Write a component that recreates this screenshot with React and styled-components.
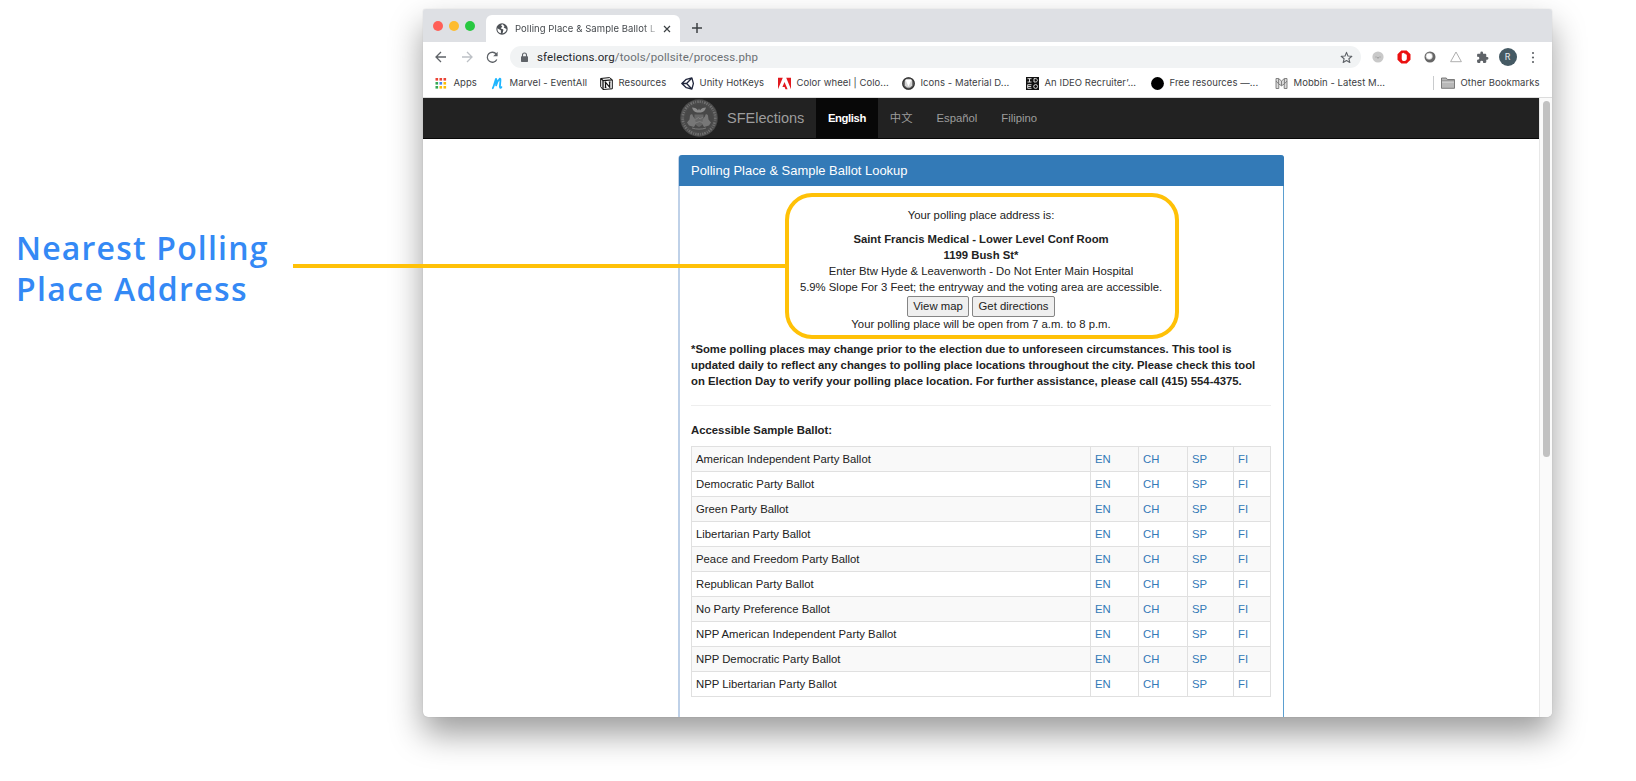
import React from "react";
import styled, { createGlobalStyle } from "styled-components";

const GlobalStyle = createGlobalStyle`
  * { box-sizing: border-box; }
  body { margin: 0; background: #fff; overflow: hidden; }
`;

const arial = `"Liberation Sans", Arial, "Noto Sans CJK SC", sans-serif`;

const Slide = styled.main`
  position: relative;
  display: flex;
  align-items: flex-start;
  width: 1636px;
  height: 781px;
  overflow: hidden;
  background: #fff;
`;

const CalloutTitle = styled.h1`
  flex: none;
  width: 423px;
  margin: 0;
  padding: 227px 0 0 16px;
  font: 600 32px/41px "Open Sans", sans-serif;
  color: #3489f5;
  white-space: nowrap;
`;

const TitleLine = styled.span`
  display: block;
  letter-spacing: ${(p) => p.$spacing}px;
`;

const Connector = styled.div`
  position: absolute;
  left: 293px;
  top: 264px;
  width: 493px;
  height: 4px;
  background: #ffc107;
`;

const Highlight = styled.div`
  position: absolute;
  left: 785px;
  top: 193px;
  width: 394px;
  height: 146px;
  border: 4px solid #ffc107;
  border-radius: 27px;
`;

const Window = styled.section`
  flex: none;
  display: flex;
  flex-direction: column;
  width: 1129px;
  height: 708px;
  margin-top: 9px;
  border-radius: 3px 3px 5px 5px;
  background: #fff;
  box-shadow: 0 17px 33px rgba(0, 0, 0, 0.39), 0 0 1px rgba(0, 0, 0, 0.25);
  overflow: hidden;
`;

const TabStrip = styled.div`
  display: flex;
  height: 33px;
  padding-left: 10px;
  background: #dee0e4;
`;

const Lights = styled.div`
  display: flex;
  gap: 6px;
  width: 53px;
  padding-top: 12px;
`;

const Light = styled.i`
  width: 10px;
  height: 10px;
  border-radius: 50%;
  background: ${(p) => p.$color};
`;

const Tab = styled.div`
  display: flex;
  align-items: center;
  width: 194px;
  height: 27px;
  margin-top: 6px;
  padding-left: 10px;
  border-radius: 6px 6px 0 0;
  background: #fff;
`;

const TabTitle = styled.span`
  flex: none;
  width: 148px;
  margin-left: 7px;
  overflow: hidden;
  white-space: nowrap;
  font: 9.5px/14px Inter, sans-serif;
  letter-spacing: 0.08px;
  color: #45494d;
  mask-image: linear-gradient(90deg, #000 128px, transparent 146px);
`;

const NewTab = styled.div`
  padding: 13px 0 0 11px;
  line-height: 0;
`;

const Toolbar = styled.div`
  display: flex;
  align-items: center;
  height: 30px;
  padding-left: 11px;
`;

const Slot = styled.span`
  flex: none;
  display: flex;
  align-items: center;
  justify-content: center;
  width: ${(p) => p.$w}px;
`;

const AddressBar = styled.div`
  display: flex;
  align-items: center;
  width: 851px;
  height: 22px;
  margin-right: 4px;
  padding: 0 8px 0 10px;
  border-radius: 11px;
  background: #f1f3f4;
`;

const Url = styled.span`
  flex: 1;
  margin-left: 8px;
  font: 11.5px/16px Roboto, sans-serif;
  letter-spacing: 0.12px;
  color: #6b6f73;
  b { font-weight: 400; color: #27292c; }
`;

const Avatar = styled.span`
  width: 18px;
  height: 18px;
  border-radius: 50%;
  background: #455a64;
  color: #e8ecee;
  font: 9px/18px Roboto, sans-serif;
  text-align: center;
`;

const Bookmarks = styled.div`
  display: flex;
  align-items: center;
  height: 26px;
  padding: 0 12px 3px 12px;
  border-bottom: 1px solid #dcdcdc;
`;

const Bookmark = styled.span`
  flex: none;
  display: flex;
  align-items: center;
  width: ${(p) => p.$w}px;
  font: 9.5px/14px Inter, sans-serif;
  letter-spacing: 0.06px;
  color: #3c4043;
  white-space: nowrap;
  svg { flex: none; margin: 0 6px 0 -0.5px; }
`;

const OtherBookmarks = styled(Bookmark)`
  margin-left: auto;
  padding-left: 7px;
  border-left: 1px solid #c9cbcd;
`;

const Viewport = styled.div`
  display: flex;
  height: 619px;
`;

const Page = styled.div`
  flex: none;
  width: 1116px;
  color: #222;
  font: 11.32px/16.2px ${arial};
`;

const Scrollbar = styled.div`
  flex: none;
  width: 13px;
  padding: 3px 3px 0;
  background: #fafafa;
  border-left: 1px solid #e8e8e8;
`;

const Thumb = styled.div`
  width: 7px;
  height: 356px;
  border-radius: 4px;
  background: #c1c1c1;
`;

const Nav = styled.nav`
  display: flex;
  align-items: center;
  height: 41px;
  padding-left: 257px;
  background: #222;
  border-bottom: 1px solid #080808;
`;

const Brand = styled.span`
  width: 89px;
  margin-left: 9px;
  font-size: 14.5px;
  color: #9d9d9d;
`;

const NavLink = styled.span`
  display: flex;
  align-items: center;
  height: 40px;
  padding: 0 12px;
  font-size: 11.3px;
  color: ${(p) => (p.$active ? "#fff" : "#9d9d9d")};
  font-weight: ${(p) => (p.$active ? 700 : 400)};
  letter-spacing: ${(p) => (p.$active ? -0.42 : 0)}px;
  background: ${(p) => (p.$active ? "#080808" : "transparent")};
`;

const Panel = styled.article`
  width: 606px;
  height: 562px;
  margin: 16px 0 0 255px;
  border: solid #5b9fd0;
  border-width: 0 1px 0 0;
  border-radius: 4px 4px 0 0;
  box-shadow: inset 2px 0 #bfd1e8;
`;

const PanelHeader = styled.header`
  height: 31px;
  margin: 0 -1px 0 1px;
  padding-left: 12px;
  border-radius: 3px 3px 0 0;
  background: #337ab7;
  color: #fff;
  font-size: 12.95px;
  line-height: 31px;
`;

const PanelBody = styled.div`
  padding: 20.5px 12px 0 13px;
`;

const Address = styled.div`
  text-align: center;
`;

const Line = styled.p`
  margin: 0 0 ${(p) => p.$gap || 0}px;
  font-weight: ${(p) => (p.$bold ? 700 : 400)};
  white-space: nowrap;
`;

const Actions = styled.div`
  display: flex;
  justify-content: center;
  gap: 3px;
  height: 20.5px;
`;

const MapButton = styled.button`
  width: ${(p) => p.$w}px;
  height: 21px;
  padding: 0;
  border: 1px solid #858585;
  border-radius: 2px;
  background: #efefef;
  color: #222;
  font: 11.33px/17px ${arial};
`;

const Notice = styled.div`
  margin-top: 8.5px;
`;

const Rule = styled.hr`
  margin: 15.5px 0 16.5px;
  border: 0;
  border-top: 1px solid #eee;
`;

const Subhead = styled.h2`
  margin: 0 0 7px;
  font: 700 11.33px/16.2px ${arial};
`;

const Ballots = styled.div`
  border: solid #e0e0e0;
  border-width: 1px 0 0 1px;
`;

const BallotRow = styled.div`
  display: grid;
  grid-template-columns: 399px 48px 49px 46px 1fr;
  height: 25.03px;
  background: ${(p) => (p.$striped ? "#f9f9f9" : "#fff")};
`;

const Cell = styled.span`
  padding: 4px 4px 0;
  border: solid #e0e0e0;
  border-width: 0 1px 1px 0;
  color: ${(p) => (p.$link ? "#337ab7" : "#222")};
  line-height: 16px;
`;

const S = ({ w = 13, h = w, vb = "0 0 24 24", children, ...p }) => (
  <svg width={w} height={h} viewBox={vb} fill="none" {...p}>{children}</svg>
);

const AppsIcon = () => (
  <S vb="0 0 13 13">
    {["#ea4335", "#ea4335", "#ea4335", "#34a853", "#4285f4", "#fbbc05", "#34a853", "#fbbc05", "#fbbc05"].map((c, i) => (
      <rect key={i} x={0.5 + (i % 3) * 4} y={1 + Math.floor(i / 3) * 4} width="2.6" height="2.6" fill={c} />
    ))}
  </S>
);
const MarvelIcon = () => (
  <S vb="0 0 13 13">
    <path d="M1.800 11.200C3.200 8.500 3.700 5.500 4.800 2.200c.8-1.200.9 2 .3 6.200C6 5.600 7.200 3 8.800 1.600c1.300-.2.2 4.800.1 8 .1 1.500.9 1.600 1.500.5" stroke="#1fb6ff" strokeWidth="1.800" strokeLinecap="round" strokeLinejoin="round" />
  </S>
);
const NotionIcon = () => (
  <S vb="0 0 13 13">
    <path d="M.7 1.500 9.500.6l2.800 2.200v9l-9.400.7L.7 9.700Z" fill="#fff" stroke="#111" />
    <path d="M.8 1.500 3 3.600v8.700M3 3.600l9.200-.7" stroke="#111" strokeWidth="1.300" />
    <path d="M5.500 10.200V5.300l4.200 4.900V5.100M4.700 5.300h1.600M4.700 10.300h1.700M8.800 5h1.800" stroke="#111" strokeWidth="1.200" />
  </S>
);
const UnityIcon = () => (
  <S vb="0 0 13 13">
    <path d="m.8 6.500 4.500-4.200 5.600-1.400 1.500 5.600-1.500 5.600-5.600-1.400ZM5.600 6.500l5-5.200M5.600 6.500l5 5.200M.8 6.500h4.800" stroke="#20263c" strokeWidth="1.300" strokeLinejoin="round" />
  </S>
);
const AdobeIcon = () => (
  <S vb="0 0 13 13">
    <path d="M0 .8h4.800L0 12.300ZM8.200.8H13v11.500ZM6.500 5l3.100 7.300H7.500l-.9-2.400H4.400Z" fill="#e1191f" />
  </S>
);
const MaterialIcon = () => (
  <S vb="0 0 13 13">
    <circle cx="6.500" cy="6.500" r="6.200" fill="#757575" />
    <path d="M3 2.500h7v6L8 10.500H5l-2-2Z" fill="#d5d5d5" />
    <path d="M3.400 2.500h6.200L6.500 9.500Z" fill="#fff" />
    <circle cx="6.500" cy="6.500" r="5.700" stroke="#333" strokeWidth="1.300" />
  </S>
);
const IdeoIcon = () => (
  <S vb="0 0 13 13">
    <path d="M0 0h13v13H0Z" fill="#111" />
    <path d="M1.500 1.700h4M3.500 1.700v3.300M1.500 5h4M8 1.600h1.500c2.500 0 2.500 3.400 0 3.400H8ZM5.500 7.700H1.700v3.600h3.800M1.700 9.500h3.500" stroke="#eee" strokeWidth=".9" />
    <circle cx="9.600" cy="9.500" r="1.900" stroke="#eee" strokeWidth=".9" />
  </S>
);
const DotIcon = () => <S vb="0 0 13 13"><circle cx="6.500" cy="6.500" r="6.400" fill="#000" /></S>;
const MobbinIcon = () => (
  <S vb="0 0 13 13">
    <path d="M1 1.500h2.600L6.500 4l2.900-2.500H12v10H9.200V7L6.500 8.800 3.800 7v4.500H1ZM3.600 1.500v5.300M9.400 1.500v5.300M1 4l2.800 3M12 4 9.200 7M6.500 4v4.800" fill="#ddd" stroke="#777" strokeWidth=".9" />
  </S>
);
const FolderIcon = () => (
  <S w={14} h={12} vb="0 0 14 12">
    <path d="M.5 1h4.800l1 1.500h7.200v8.800H.5Z" fill="#b8b8b8" stroke="#6f6f6f" strokeWidth=".9" /><path d="M1 4h12" stroke="#7d7d7d" /><path d="M1 5h12" stroke="#ddd" />
  </S>
);

const Seal = () => (
  <S w={38} vb="0 0 38 38">
    <circle cx="19" cy="19" r="18.800" fill="#4b4b4b" />
    <circle cx="19" cy="19" r="16.300" stroke="#707070" strokeWidth="2.600" strokeDasharray="1.300 1.100 .8 1.300 1.600 .9" />
    <circle cx="19" cy="19" r="13.600" fill="#484848" />
    <path d="M12 8.500c3 .2 5 1 6 3l1-2 1 2c1-2 3-2.800 6-3-.8 3-2.500 4.500-5.200 5h-3.600C14.500 13 12.800 11.500 12 8.500Z" fill="#8c8c8c" />
    <path d="M14.500 15.500h9v7.500c-.8 3-2.500 4-4.500 5-2-1-3.700-2-4.500-5Z" fill="#666" />
    <path d="M10 16.500c1-1.800 3-1.300 2.800.5l2.200 3 1 4.500-2 3.500-5-1.500-2-3 2.500-3ZM28 16.500c-1-1.800-3-1.300-2.800.5l-2.200 3-1 4.500 2 3.500 5-1.500 2-3-2.500-3Z" fill="#777" />
    <path d="m15.500 20.500 3-2 1.500 1.500 3-2M15.500 24l4-1.500 3 1M12 29c4 1.500 10 1.500 14 0" stroke="#858585" strokeWidth=".8" />
  </S>
);

const bookmarks = [
  [AppsIcon, "Apps", 56],
  [MarvelIcon, "Marvel - EventAll", 109],
  [NotionIcon, "Resources", 81],
  [UnityIcon, "Unity HotKeys", 97],
  [AdobeIcon, "Color wheel | Colo...", 124],
  [MaterialIcon, "Icons - Material D...", 124],
  [IdeoIcon, "An IDEO Recruiter’...", 125],
  [DotIcon, "Free resources —...", 124],
  [MobbinIcon, "Mobbin - Latest M...", 115],
];

const ballots = [
  "American Independent Party Ballot",
  "Democratic Party Ballot",
  "Green Party Ballot",
  "Libertarian Party Ballot",
  "Peace and Freedom Party Ballot",
  "Republican Party Ballot",
  "No Party Preference Ballot",
  "NPP American Independent Party Ballot",
  "NPP Democratic Party Ballot",
  "NPP Libertarian Party Ballot",
];

const BrowserChrome = () => (
  <>
    <TabStrip>
      <Lights><Light $color="#ff5f57" /><Light $color="#febc2e" /><Light $color="#28c840" /></Lights>
      <Tab>
        <S w={12} vb="0 0 12 12">
          <circle cx="6" cy="6" r="5.700" fill="#4d5156" />
          <path d="M6.500 1.300C5 1.500 4.800 3 6 3.300c.8.400-.3 1.300-1 1.500-.5.400 0 1.200 1.200 1.200 1 .1 1.500 1 1 1.700l-.7 2.700c2.500-.5 4.100-2.500 4-4.500L9 5.200 7.700 4.500l.8-1.300ZM1.400 5.200l2 1.300c1 .3 1.700.7 1.500 1.500v2.300C2.700 9.700 1.200 8 1.400 5.200Z" fill="#fff" />
        </S>
        <TabTitle>Polling Place &amp; Sample Ballot L</TabTitle>
        <S w={8} vb="0 0 8 8"><path d="m1 1 6 6M7 1 1 7" stroke="#3c4043" strokeWidth="1.200" /></S>
      </Tab>
      <NewTab><S w={12} vb="0 0 12 12"><path d="M6 1v10M1 6h10" stroke="#3c4043" strokeWidth="1.500" /></S></NewTab>
    </TabStrip>
    <Toolbar>
      <Slot $w={14}><S w={14} vb="0 0 14 14"><path d="M12 7H2.500M7 2 2 7l5 5" stroke="#5f6368" strokeWidth="1.300" /></S></Slot>
      <Slot $w={38}><S w={14} vb="0 0 14 14"><path d="M2 7h9.500M7 2l5 5-5 5" stroke="#bdc1c6" strokeWidth="1.300" /></S></Slot>
      <Slot $w={13}><S w={13} vb="0 0 13 13"><path d="M10.800 8.500A5 5 0 1 1 10.300 3.200" stroke="#5f6368" strokeWidth="1.300" /><path d="M11.600.8v4.400H7.200Z" fill="#5f6368" /></S></Slot>
      <Slot $w={11} />
      <AddressBar>
        <S w={9} h={11} vb="0 0 9 11"><path d="M2.500 5V3a2 2 0 0 1 4 0v2" stroke="#5f6368" strokeWidth="1.100" /><rect x="1" y="4.300" width="7" height="5.700" rx=".7" fill="#5f6368" /></S>
        <Url><b>sfelections.org</b>/tools/pollsite/process.php</Url>
        <S w={13}><path d="m12 2.500 2.700 6.700 7.200.5-5.500 4.600 1.800 7L12 17.400l-6.200 3.900 1.800-7-5.500-4.600 7.200-.5Z" stroke="#5f6368" strokeWidth="2" strokeLinejoin="round" /></S>
      </AddressBar>
      <Slot $w={26}><S w={12} vb="0 0 12 12"><circle cx="6" cy="6" r="5.600" fill="#c9c9c9" /><path d="M3.500 6h1M7.500 6h1M5 6.800h2" stroke="#888" strokeWidth=".8" /></S></Slot>
      <Slot $w={26}><S w={14} vb="0 0 14 14"><path d="M4.300.5h5.400l3.800 3.800v5.400l-3.800 3.800H4.300L.5 9.700V4.300Z" fill="#eb1010" /><path d="M4.800 3.200c.8-.3 1 0 1 .5.200-1.200 1.400-1.200 1.500 0 .9-.6 1.400 0 1.400.8.900-.2 1.100.3 1.100 1v3c0 1.500-1 2.500-2.300 2.500H6.600c-1.400 0-1.900-1.500-1.900-2.500Z" fill="#fff" /></S></Slot>
      <Slot $w={26}><S w={12} vb="0 0 12 12"><circle cx="6" cy="6" r="5.500" fill="#666" /><circle cx="5.200" cy="5.200" r="3.300" fill="#fff" stroke="#aaa" strokeWidth=".6" /></S></Slot>
      <Slot $w={26}><S w={12} vb="0 0 12 12"><path d="M6 1 11.400 10.700H.6Z" stroke="#a6a6a6" strokeWidth=".9" /></S></Slot>
      <Slot $w={26}><S w={13}><path d="M20.500 11H19V7c0-1.100-.9-2-2-2h-4V3.500a2.500 2.500 0 0 0-5 0V5H4c-1.100 0-2 .9-2 2v3.800h1.500a2.700 2.700 0 0 1 0 5.400H2V20c0 1.100.9 2 2 2h3.800v-1.500a2.700 2.700 0 0 1 5.400 0V22H17c1.100 0 2-.9 2-2v-4h1.500a2.500 2.500 0 0 0 0-5Z" fill="#5f6368" /></S></Slot>
      <Slot $w={25}><Avatar>R</Avatar></Slot>
      <Slot $w={26}><S w={4} h={13} vb="0 0 4 13"><circle cx="2" cy="2" r="1.100" fill="#5f6368" /><circle cx="2" cy="6.500" r="1.100" fill="#5f6368" /><circle cx="2" cy="11" r="1.100" fill="#5f6368" /></S></Slot>
    </Toolbar>
    <Bookmarks>
      {bookmarks.map(([Icon, label, w]) => (
        <Bookmark key={label} $w={w}><Icon />{label}</Bookmark>
      ))}
      <OtherBookmarks $w={107}><FolderIcon />Other Bookmarks</OtherBookmarks>
    </Bookmarks>
  </>
);

export default function App() {
  return (
    <Slide>
      <GlobalStyle />
      <CalloutTitle>
        <TitleLine $spacing={1.18}>Nearest Polling</TitleLine>
        <TitleLine $spacing={1.36}>Place Address</TitleLine>
      </CalloutTitle>
      <Window>
        <BrowserChrome />
        <Viewport>
          <Page>
            <Nav>
              <Seal />
              <Brand>SFElections</Brand>
              <NavLink $active>English</NavLink>
              <NavLink>中文</NavLink>
              <NavLink>Español</NavLink>
              <NavLink>Filipino</NavLink>
            </Nav>
            <Panel>
              <PanelHeader>Polling Place &amp; Sample Ballot Lookup</PanelHeader>
              <PanelBody>
                <Address>
                  <Line $gap={8}>Your polling place address is:</Line>
                  <Line $bold>Saint Francis Medical - Lower Level Conf Room</Line>
                  <Line $bold>1199 Bush St*</Line>
                  <Line>Enter Btw Hyde &amp; Leavenworth - Do Not Enter Main Hospital</Line>
                  <Line>5.9% Slope For 3 Feet; the entryway and the voting area are accessible.</Line>
                  <Actions>
                    <MapButton $w={62}>View map</MapButton>
                    <MapButton $w={83}>Get directions</MapButton>
                  </Actions>
                  <Line>Your polling place will be open from 7 a.m. to 8 p.m.</Line>
                </Address>
                <Notice>
                  <Line $bold>*Some polling places may change prior to the election due to unforeseen circumstances. This tool is</Line>
                  <Line $bold>updated daily to reflect any changes to polling place locations throughout the city. Please check this tool</Line>
                  <Line $bold>on Election Day to verify your polling place location. For further assistance, please call (415) 554-4375.</Line>
                </Notice>
                <Rule />
                <Subhead>Accessible Sample Ballot:</Subhead>
                <Ballots>
                  {ballots.map((name, i) => (
                    <BallotRow key={name} $striped={i % 2 === 0}>
                      <Cell>{name}</Cell>
                      {["EN", "CH", "SP", "FI"].map((l) => <Cell key={l} $link>{l}</Cell>)}
                    </BallotRow>
                  ))}
                </Ballots>
              </PanelBody>
            </Panel>
          </Page>
          <Scrollbar><Thumb /></Scrollbar>
        </Viewport>
      </Window>
      <Connector />
      <Highlight />
    </Slide>
  );
}
